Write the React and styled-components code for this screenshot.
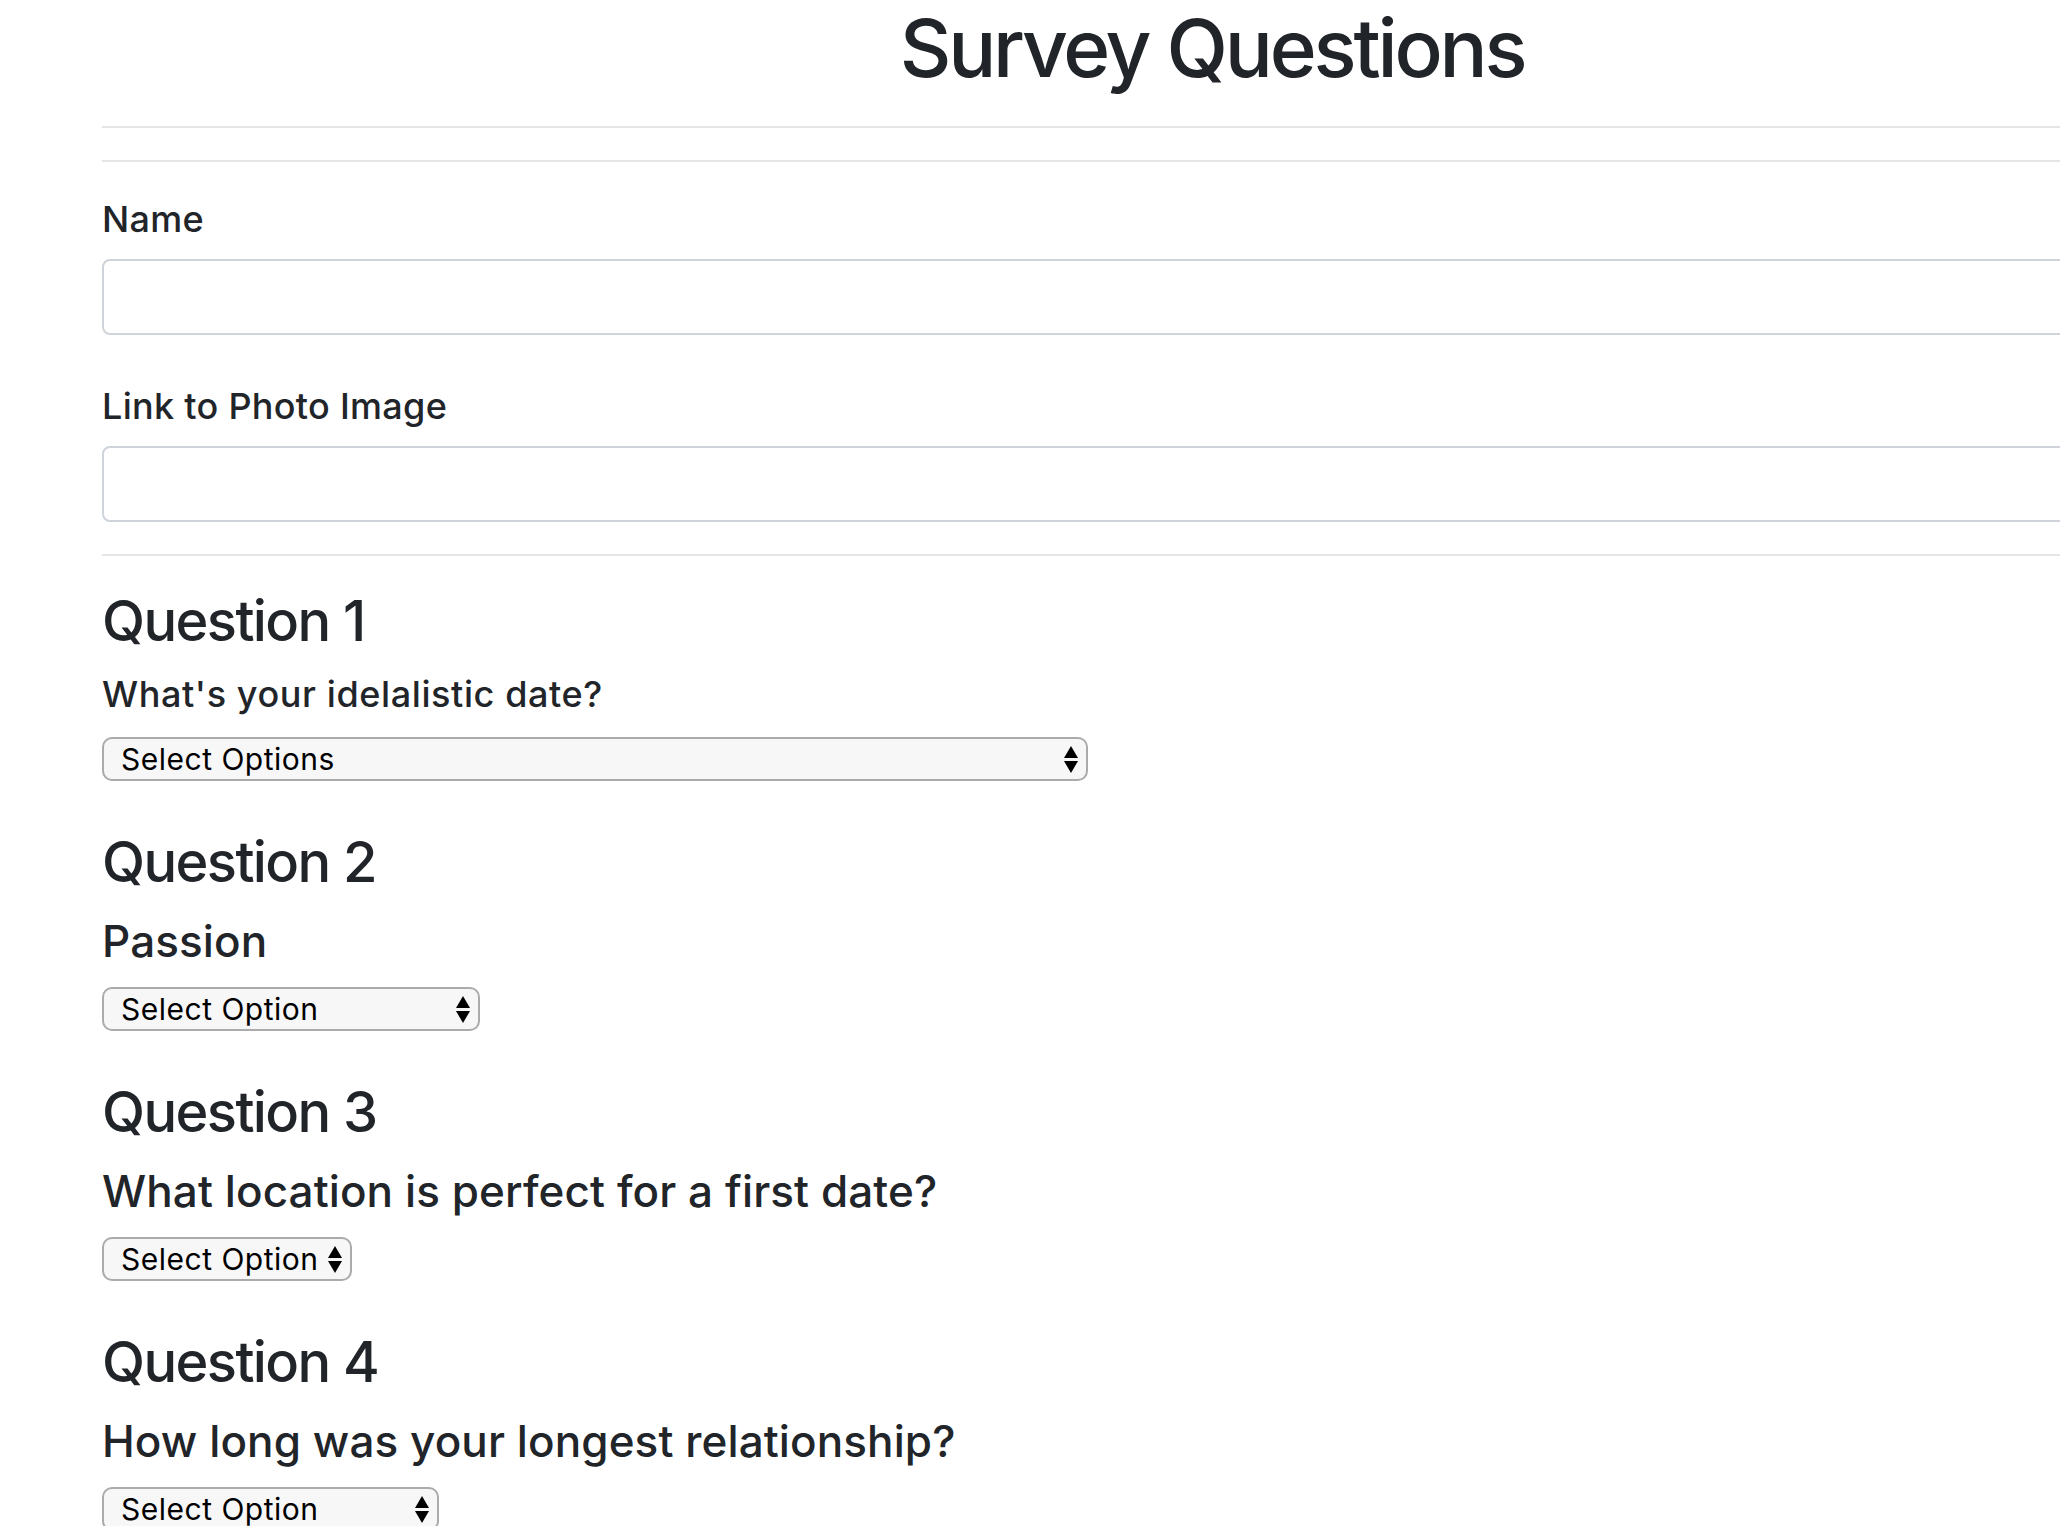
import React from 'react'
import styled, { createGlobalStyle } from 'styled-components'

const GlobalStyle = createGlobalStyle`
  html, body {
    margin: 0;
    padding: 0;
    background: #fff;
    overflow-x: hidden;
  }
  body {
    font-family: Inter, "Liberation Sans", sans-serif;
    color: #212529;
  }
`

const Page = styled.div`
  width: 2220px;
  padding-left: 102px;
`

const Title = styled.h1`
  margin: 0;
  font-size: 80px;
  font-weight: 500;
  line-height: 96px;
  letter-spacing: -3.2px;
  text-align: center;
`

const Divider = styled.hr`
  border: 0;
  border-top: 2px solid #e4e5e6;
  margin: ${p => (p.$first ? '30px' : '32px')} 0 32px;
`

const FormGroup = styled.div`
  & + & {
    margin-top: 46px;
  }
`

const Label = styled.label`
  display: block;
  font-size: 36px;
  font-weight: 500;
  line-height: 50px;
  letter-spacing: 0.3px;
  margin-bottom: 15px;
`

const TextInput = styled.input`
  display: block;
  box-sizing: border-box;
  width: 100%;
  height: 76px;
  border: 2px solid #ced4da;
  border-radius: 8px;
  background: #fff;
  padding: 0 24px;
  font-size: 32px;
  font-family: inherit;
`

const Question = styled.section`
  & + & {
    margin-top: 48px;
  }
`

const QuestionTitle = styled.h3`
  margin: 0;
  font-size: 56px;
  font-weight: 500;
  line-height: 67px;
  letter-spacing: -1.6px;
`

const Prompt = styled.h4`
  margin: ${p => (p.$small ? '14px 0 18px' : '15px 0 16px')};
  font-size: ${p => (p.$small ? '36px' : '44px')};
  line-height: ${p => (p.$small ? '50px' : '60px')};
  letter-spacing: ${p => (p.$small ? '0.6px' : '0.1px')};
  font-weight: 500;
`

const SelectWrap = styled.div`
  position: relative;
  width: ${p => p.$width}px;
  height: 44px;
`

const Select = styled.select`
  appearance: none;
  -webkit-appearance: none;
  box-sizing: border-box;
  width: 100%;
  height: 44px;
  margin: 0;
  padding: 0 24px 0 17px;
  border: 2px solid #ababab;
  border-radius: 10px;
  background: #f7f7f7;
  color: #000;
  font-family: inherit;
  font-size: 30px;
  letter-spacing: 0.5px;
  line-height: 40px;
`

const Arrows = styled.svg`
  position: absolute;
  right: 10px;
  top: 8px;
  pointer-events: none;
`

const Dropdown = ({ width, placeholder }) => (
  <SelectWrap $width={width}>
    <Select defaultValue="">
      <option value="">{placeholder}</option>
    </Select>
    <Arrows width="14" height="28" viewBox="0 0 14 28">
      <polygon points="0,13 7,1 14,13" fill="#000" />
      <polygon points="0,16 14,16 7,28" fill="#000" />
    </Arrows>
  </SelectWrap>
)

const questions = [
  { title: 'Question 1', prompt: "What's your idelalistic date?", small: true, placeholder: 'Select Options', width: 986 },
  { title: 'Question 2', prompt: 'Passion', placeholder: 'Select Option', width: 378 },
  { title: 'Question 3', prompt: 'What location is perfect for a first date?', placeholder: 'Select Option', width: 250 },
  { title: 'Question 4', prompt: 'How long was your longest relationship?', placeholder: 'Select Option', width: 337 },
]

export default function App() {
  return (
    <>
      <GlobalStyle />
      <Page>
        <Title>Survey Questions</Title>
        <Divider $first />
        <Divider />
        <FormGroup>
          <Label htmlFor="name">Name</Label>
          <TextInput id="name" type="text" />
        </FormGroup>
        <FormGroup>
          <Label htmlFor="photo">Link to Photo Image</Label>
          <TextInput id="photo" type="text" />
        </FormGroup>
        <Divider />
        {questions.map(q => (
          <Question key={q.title}>
            <QuestionTitle>{q.title}</QuestionTitle>
            <Prompt $small={q.small}>{q.prompt}</Prompt>
            <Dropdown width={q.width} placeholder={q.placeholder} />
          </Question>
        ))}
      </Page>
    </>
  )
}
